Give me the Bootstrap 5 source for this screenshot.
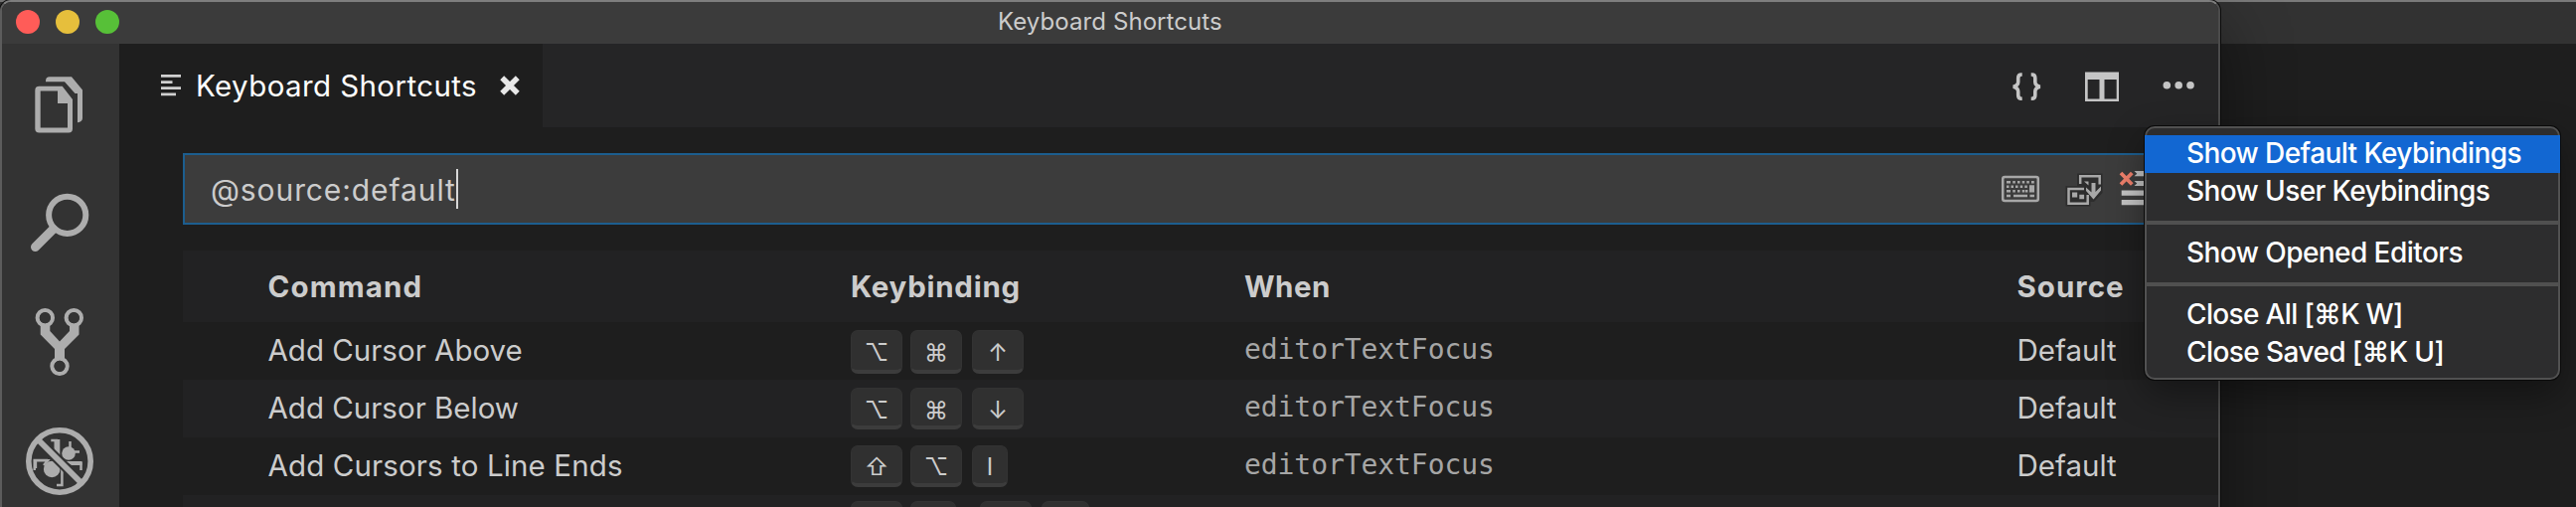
<!DOCTYPE html>
<html lang="en">
<head>
<meta charset="utf-8">
<title>Keyboard Shortcuts</title>
<meta name="viewport" content="width=device-width, initial-scale=1">
<link href="https://cdn.jsdelivr.net/npm/bootstrap@5.3.0/dist/css/bootstrap.min.css" rel="stylesheet">
<style>
  body { width: 2592px; height: 510px; margin: 0; overflow: hidden; background: #1e1e1e; color: #ccc; font-family: Inter, "Liberation Sans", sans-serif; font-size: 29.5px; line-height: 1; white-space: nowrap; }
  svg { display: block; flex: none; }
  .desktop { height: 510px; overflow: hidden; background: linear-gradient(#7a7a7a 0 2px, #323232 2px 44px, #1e1e1e 44px); }
  .editor-window { width: 2234px; height: 580px; border: 2px solid #4b4b4b; border-top-color: #7e7e7e; border-left-color: #5c5c5c; border-radius: 11px 11px 0 0; overflow: hidden; background: #1e1e1e; box-shadow: 0 0 0 1px #0c0c0c, 0 24px 70px rgba(0,0,0,.42); }
  .titlebar { height: 42px; background: #3b3b3b; }
  .lights { width: 1002px; padding-left: 14px; padding-bottom: 2px; gap: 16px; }
  .lights i { width: 24px; height: 24px; border-radius: 50%; }
  .window-title { font-size: 24px; letter-spacing: .08px; padding-bottom: 3px; }
  .activity { width: 118px; background: #333; }
  .tabs { height: 84px; background: #252526; }
  .tab-active { width: 426px; background: #1e1e1e; color: #fff; padding-left: 42px; }
  .tab-label { letter-spacing: .4px; padding-top: 2px; margin-left: 15px; width: 306px; }
  .content { padding: 26px 0 0 64px; }
  .search { height: 72px; background: #3c3c3c; border: 2px solid #1c5e8f; border-right: 0; padding-left: 26px; font-size: 30px; letter-spacing: .9px; }
  .search-text { padding-top: 2px; }
  .caret { width: 2px; height: 40px; background: #d8d8d8; }
  .table-rows { margin-top: 26px; }
  .kb-row { height: 58px; padding-left: 85.5px; background: #1e1e1e; }
  .kb-row.alt { background: #222223; }
  .kb-head { height: 72px; font-weight: 700; padding-top: 2px; }
  .c-cmd { width: 586.5px; } .c-key { width: 396px; } .c-when { width: 777.5px; }
  .when-text { font-family: "DejaVu Sans Mono", monospace; font-size: 28px; letter-spacing: -.07px; color: #a6a6a6; padding-bottom: 2px; }
  .keys { gap: 8px; height: 58px; padding-top: 8px; }
  .key { width: 52px; height: 42px; border-radius: 7px; background: #303030; border: 1px solid #333; border-bottom: 4px solid #3c3c3c; color: #ccc; font-family: Inter, sans-serif; font-size: 24px; line-height: 44px; text-align: center; }
  .key.tall { height: 44px; }
  .key.raised { line-height: 41px; }
  .ctx { left: 2158px; top: 127px; width: 418px; height: 255px; background: #2d2d2e; border: 2px solid #515151; border-radius: 10px; padding: 7px 0 0; color: #fff; font-weight: 500; font-size: 28px; box-shadow: 0 0 0 1px #0a0a0a, 0 14px 36px rgba(0,0,0,.38); }
  .ctx-item { height: 38px; margin: 0 -2px; padding: 0 0 3px 42px; }
  .ctx-item.on { background: #1267d2; }
  .ctx-sep { height: 4px; background: #505050; margin: 10px -2px; }
</style>
</head>
<body>
<div class="desktop position-relative">
  <div class="editor-window d-flex flex-column">
    <div class="titlebar d-flex align-items-center flex-shrink-0">
      <div class="lights d-flex align-items-center">
        <i style="background:#ff5c58"></i><i style="background:#e6bf3c"></i><i style="background:#57c038"></i>
      </div>
      <div class="window-title">Keyboard Shortcuts</div>
    </div>
    <div class="d-flex flex-grow-1">
      <nav class="activity">
        <svg width="118" height="464" viewBox="2 44 118 464" fill="#adadad" stroke="#adadad" stroke-width="0">
          <path d="M46 82.300V81.500Q46 77.300 50 77.300H72L83 90.500V119Q83 122.500 78 123.300V94H75.500L65 82.300Z"/>
          <path fill-rule="evenodd" d="M39.500 86.800H62.700L73 100V129.500Q73 133.500 69 133.500H39.500Q35.300 133.500 35.300 129.500V91Q35.300 86.800 39.500 86.800ZM40.700 91.500V128.500H68V104H58V91.500Z"/>
          <circle cx="67.700" cy="216.300" r="18.600" fill="none" stroke-width="6"/>
          <path d="M53.500 230.500 35.500 248.500" stroke-width="9" stroke-linecap="round"/>
          <g fill="none" stroke-width="4.200"><circle cx="45.300" cy="319.700" r="7.600"/><circle cx="74.300" cy="319.700" r="7.600"/><circle cx="60" cy="368.300" r="7.600"/></g>
          <path d="M40.700 326V336.500L55 351V361H65V351L79.500 336.500V326H70V333L60 343.500 50.300 333V326Z"/>
          <path d="M45.300 314.100a5.600 5.600 0 1 0 .1 0ZM74.300 314.100a5.600 5.600 0 1 0 .1 0ZM60 362.700a5.600 5.600 0 1 0 .1 0Z" fill="#333"/>
          <circle cx="69" cy="456" r="6.800"/><circle cx="52.200" cy="472" r="8.300"/>
          <path fill="none" stroke-width="2.500" d="M51.300 443H58M70.500 444V454M68 454.500H80M34.700 473V463H48M35.900 471V463.300H48L44 468M62.400 468V488H57M72 466H81.500V473"/>
          <path d="M54.500 442H60.300V459L54.500 454ZM66 464H82.500V468H72Z"/>
          <path d="M39 443 81 485" stroke="#333" stroke-width="10"/>
          <path d="M39 443 81 485" stroke-width="6"/>
          <circle cx="60" cy="464" r="31.200" fill="none" stroke-width="5.600"/>
        </svg>
      </nav>
      <main class="flex-grow-1">
        <div class="tabs d-flex justify-content-between">
          <div class="tab-active d-flex align-items-center">
            <svg width="20" height="22" viewBox="0 0 20 22" fill="#d0d0d0"><path d="M0 0H20V2.700H0ZM0 6.200H11.500V8.900H0ZM0 12.300H20V15H0ZM0 18.500H15V21.200H0Z"/></svg>
            <span class="tab-label">Keyboard Shortcuts</span>
            <svg width="20" height="20" viewBox="0 0 20 20" stroke="#e8e8e8" stroke-width="5.500"><path d="M2.200 2.200 17.800 17.800M17.800 2.200 2.200 17.800"/></svg>
          </div>
          <svg width="232" height="84" viewBox="2000 44 232 84" fill="#c5c5c5">
            <g fill="none" stroke="#c5c5c5" stroke-width="3.600">
              <path d="M2034.700 75H2034Q2030.700 75 2030.700 78.500V82.500Q2030.700 86 2025.800 87.200 2030.700 88.300 2030.700 92V95.800Q2030.700 99.300 2034 99.300H2034.700"/>
              <path d="M2043.700 75H2044.500Q2047.800 75 2047.800 78.500V82.500Q2047.800 86 2052.700 87.200 2047.800 88.300 2047.800 92V95.800Q2047.800 99.300 2044.500 99.300H2043.700"/>
            </g>
            <path fill-rule="evenodd" d="M2098 72.500H2132V102H2098ZM2100.700 80V99.500H2112.500V80ZM2117.500 80V99.500H2129.700V80Z"/>
            <circle cx="2180.300" cy="85.700" r="3.800"/><circle cx="2192.200" cy="85.700" r="3.800"/><circle cx="2204" cy="85.700" r="3.800"/>
          </svg>
        </div>
        <div class="content">
          <div class="search d-flex align-items-center">
            <span class="search-text">@source:default</span><span class="caret"></span>
            <svg class="ms-auto" width="232" height="68" viewBox="2000 156 232 68" fill="#a8a8a8">
              <rect x="2015.200" y="177.900" width="35.600" height="24" rx="2" fill="none" stroke="#a8a8a8" stroke-width="2.500"/>
              <path d="M2019 182h4v2.500h-4zM2025.300 182h2.500v2.500h-2.500zM2030 182h2.500v2.500h-2.500zM2034.700 182h2.500v2.500h-2.500zM2039.300 182h2.500v2.500h-2.500zM2044 182h2.800v2.500h-2.800zM2019 186.500h2.500v2.500h-2.500zM2023.500 186.500h2.500v2.500h-2.500zM2028 186.500h2.500v2.500h-2.500zM2032.700 186.500h2.500v2.500h-2.500zM2037.300 186.500h2.500v2.500h-2.500zM2042 186.300h5v7.200h-5zM2019 191h4v2.500h-4zM2025.300 191h2.500v2.500h-2.500zM2030 191h2.500v2.500h-2.500zM2034.700 191h2.500v2.500h-2.500zM2037.900 191h2.500v2.500h-2.500zM2019 195.800h4v2.500h-4zM2026 195.800h14v2.500h-14zM2042.500 195.800h4.500v2.500h-4.500z"/>
              <path d="M2090 174.500H2115.500V194L2107 203H2103.500V207.500H2078.500V187H2090Z" fill="#2d2d2d"/>
              <path d="M2093.200 185V177.300H2112.700V185.500" fill="none" stroke="#a8a8a8" stroke-width="2.500"/>
              <path d="M2097 182.500H2101.500V186.500ZM2104.500 184H2108.500V193L2114 187.500V191.500L2106.500 200.500 2099 192V188.500L2104.500 193.500Z"/>
              <path d="M2097 190H2081.500V204.700H2100.700V196" fill="none" stroke="#a8a8a8" stroke-width="2.500"/>
              <path d="M2085 193.500h5.200v5H2085ZM2092.300 195.700h4.800v4.500h-4.800Z"/>
              <path d="M2147.500 172H2180V177.300H2147.500L2150.300 174.700ZM2147.500 182H2180V187H2147.500L2150.300 184.500ZM2134.700 191.500H2180V196.700H2134.700ZM2134.700 201H2180V206.200H2134.700Z" fill="#c5c5c5"/>
              <path d="M2134 174 2145.300 185.500M2145.300 174 2134 185.500" stroke="#f0806c" stroke-width="3.800"/>
            </svg>
          </div>
          <div class="table-rows">
            <div class="kb-row kb-head alt d-flex align-items-center">
              <div class="c-cmd" style="letter-spacing:1.13px">Command</div><div class="c-key" style="letter-spacing:.74px">Keybinding</div><div class="c-when" style="letter-spacing:.48px">When</div><div style="letter-spacing:1.02px">Source</div>
            </div>
            <div class="kb-row d-flex align-items-center">
              <div class="c-cmd">Add Cursor Above</div>
              <div class="c-key keys d-flex"><kbd class="key tall p-0">⌥</kbd><kbd class="key tall p-0">⌘</kbd><kbd class="key tall p-0" style="margin-left:2px">↑</kbd></div>
              <div class="c-when when-text">editorTextFocus</div><div>Default</div>
            </div>
            <div class="kb-row alt d-flex align-items-center">
              <div class="c-cmd">Add Cursor Below</div>
              <div class="c-key keys d-flex"><kbd class="key p-0">⌥</kbd><kbd class="key p-0">⌘</kbd><kbd class="key p-0" style="margin-left:2px">↓</kbd></div>
              <div class="c-when when-text">editorTextFocus</div><div>Default</div>
            </div>
            <div class="kb-row d-flex align-items-center">
              <div class="c-cmd" style="letter-spacing:.13px">Add Cursors to Line Ends</div>
              <div class="c-key keys d-flex"><kbd class="key raised p-0">⇧</kbd><kbd class="key raised p-0">⌥</kbd><kbd class="key raised p-0" style="margin-left:2px;width:36px">I</kbd></div>
              <div class="c-when when-text">editorTextFocus</div><div>Default</div>
            </div>
            <div class="kb-row alt d-flex">
              <div class="c-cmd"></div>
              <div class="c-key keys d-flex" style="padding-top:6px"><kbd class="key p-0"></kbd><kbd class="key p-0" style="width:46px"></kbd><kbd class="key p-0" style="margin-left:16px"></kbd><kbd class="key p-0" style="margin-left:2px;width:48px"></kbd></div>
            </div>
          </div>
        </div>
      </main>
    </div>
  </div>
  <div class="ctx position-absolute">
    <div class="ctx-item on d-flex align-items-center" style="letter-spacing:-.59px">Show Default Keybindings</div>
    <div class="ctx-item d-flex align-items-center" style="letter-spacing:-.6px">Show User Keybindings</div>
    <div class="ctx-sep"></div>
    <div class="ctx-item d-flex align-items-center" style="letter-spacing:-.56px">Show Opened Editors</div>
    <div class="ctx-sep"></div>
    <div class="ctx-item d-flex align-items-center" style="letter-spacing:-.65px">Close All [⌘K W]</div>
    <div class="ctx-item d-flex align-items-center" style="letter-spacing:-.58px">Close Saved [⌘K U]</div>
  </div>
</div>
<script src="https://cdn.jsdelivr.net/npm/bootstrap@5.3.0/dist/js/bootstrap.bundle.min.js"></script>
</body>
</html>
